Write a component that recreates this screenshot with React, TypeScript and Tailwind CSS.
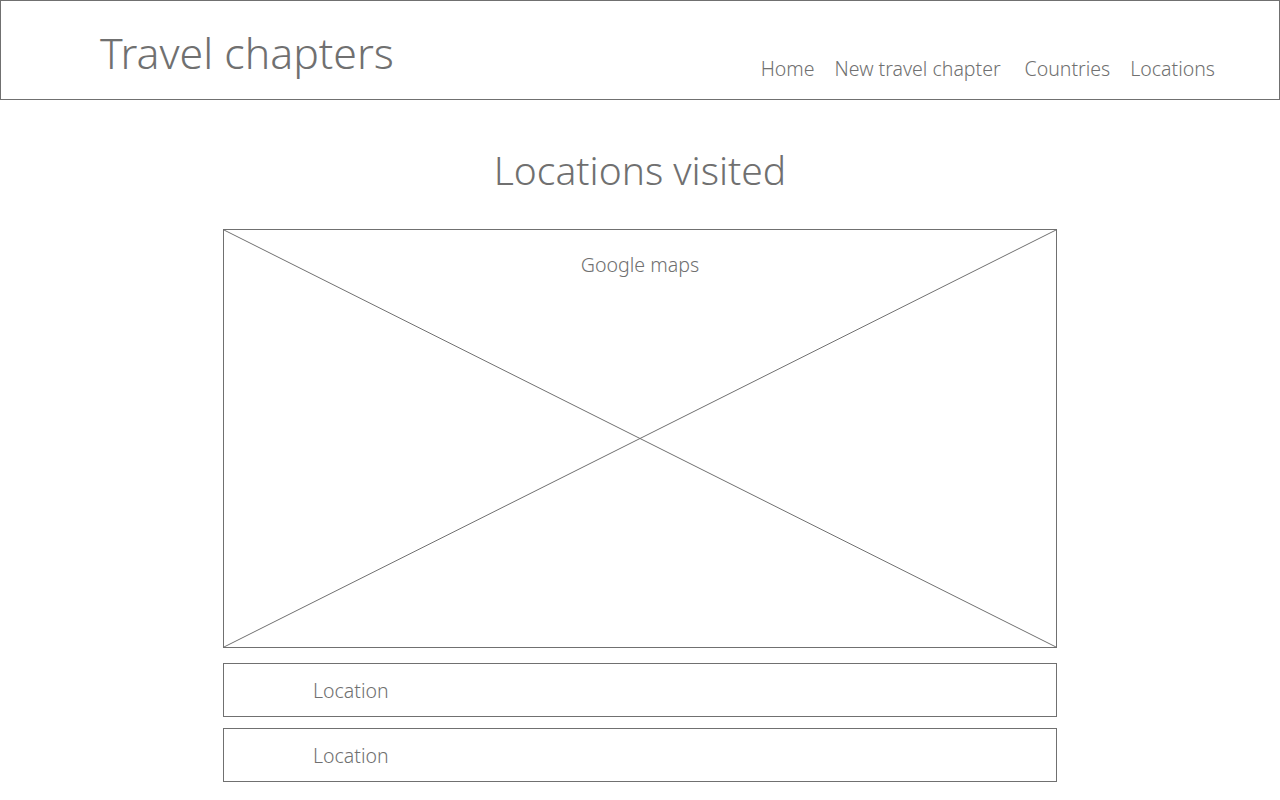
import React from 'react';

const font = { fontFamily: '"Noto Sans", "Open Sans", sans-serif' };

function Header() {
  return (
    <header className="h-[100px] border border-[#707070] flex items-start justify-between pl-[99px] pr-[64px]">
      <h1 className="mt-[24px] text-[42.8px] font-light leading-[56px] text-[#707070]">Travel chapters</h1>
      <nav className="mt-[54px] flex text-[19.5px] font-light leading-[28px] text-[#707070]">
        <a href="#" className="whitespace-nowrap">Home</a>
        <a href="#" className="ml-[20px] whitespace-nowrap">New travel chapter</a>
        <a href="#" className="ml-[24px] whitespace-nowrap">Countries</a>
        <a href="#" className="ml-[20px] whitespace-nowrap">Locations</a>
      </nav>
    </header>
  );
}

function MapPlaceholder() {
  return (
    <div className="relative h-[419px] border border-[#707070]">
      <svg className="absolute inset-0 w-full h-full" viewBox="0 0 100 100" preserveAspectRatio="none">
        <line x1="0" y1="0" x2="100" y2="100" stroke="#707070" strokeWidth="1" vectorEffect="non-scaling-stroke" />
        <line x1="100" y1="0" x2="0" y2="100" stroke="#707070" strokeWidth="1" vectorEffect="non-scaling-stroke" />
      </svg>
      <p className="relative pt-[22px] text-center text-[19.6px] font-light leading-[26px] text-[#707070]">Google maps</p>
    </div>
  );
}

function LocationRow() {
  return (
    <div className="h-[54px] border border-[#707070] flex items-center pl-[89px] pt-[1px]">
      <span className="text-[19.5px] font-light text-[#707070]">Location</span>
    </div>
  );
}

export default function App() {
  return (
    <div className="min-h-[800px] bg-white" style={font}>
      <Header />
      <main className="w-[834px] mx-auto">
        <h2 className="mt-[42px] text-center text-[39px] font-light leading-[56px] text-[#707070]">Locations visited</h2>
        <div className="mt-[31px]">
          <MapPlaceholder />
        </div>
        <div className="mt-[15px] flex flex-col gap-[11px]">
          <LocationRow />
          <LocationRow />
        </div>
      </main>
    </div>
  );
}
